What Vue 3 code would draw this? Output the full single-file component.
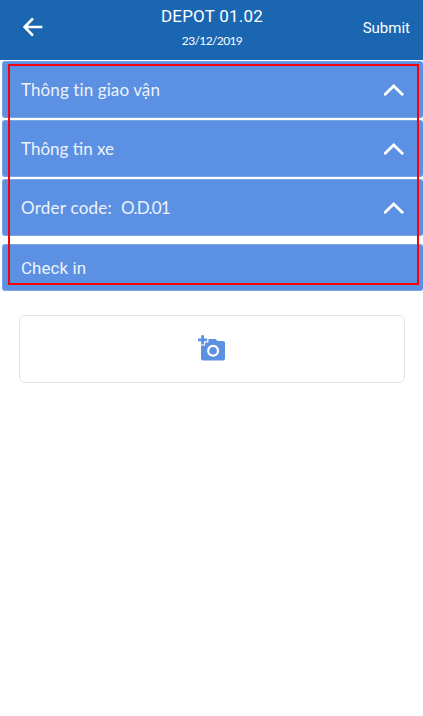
<script setup>
const sections = [
  { title: 'Thông tin giao vận' },
  { title: 'Thông tin xe' },
  { title: 'Order code:', value: 'O.D.01' }
]
</script>

<template>
  <div class="screen">
    <header class="bar">
      <button class="back" aria-label="Back">
        <svg width="20" height="20" viewBox="0 0 20 20"><path d="M19.3 10H2M10 1.4L1.6 10l8.4 8.6" /></svg>
      </button>
      <div class="heading">
        <h1>DEPOT 01.02</h1>
        <p>23/12/2019</p>
      </div>
      <button class="submit">Submit</button>
    </header>
    <main>
      <section v-for="(item, i) in sections" :key="item.title" class="panel" :class="'panel-' + i">
        <span>{{ item.title }}</span>
        <span v-if="item.value" class="value">{{ item.value }}</span>
        <svg width="20" height="12" viewBox="0 0 20 12"><path class="chevron" d="M1.2 10.3L9.7 2l8.5 8.3" /></svg>
      </section>
      <section class="panel check"><span>Check in</span></section>
      <button class="photo" aria-label="Add photo">
        <svg width="28" height="27" viewBox="0 0 28 27">
          <path class="fill" d="M3.2 .2h2.8v3.4H9.2v2.6H6v3.3H3.2V6.2H0V3.6h3.2z" />
          <path class="fill" fill-rule="evenodd" d="M10.4 4h7.1l2 2H25q2 0 2 2v15.4q0 2-2 2H5q-2 0-2-2V10.5h4V7.5h3.4zM15.1 9.7a6 6 0 1 0 .01 0z" />
          <circle class="fill" cx="15.1" cy="15.7" r="3.8" />
        </svg>
      </button>
    </main>
    <div class="outline"></div>
  </div>
</template>

<style>
body { margin: 0; background: #fff; }
</style>

<style scoped>
.screen { position: relative; width: 423px; height: 716px; overflow: hidden; background: #fff; color: #fff; font-family: Roboto, "Liberation Sans", sans-serif; }
button { border: 0; padding: 0; background: none; color: inherit; font: inherit; }
.bar { box-sizing: border-box; height: 60px; display: grid; grid-template-columns: 110px 1fr 110px; background: #1b66b1; }
.back { display: flex; align-items: flex-start; padding: 17px 0 0 23px; }
svg { display: block; flex: none; }
path { fill: none; stroke: #fff; stroke-width: 2.7; }
.chevron { stroke-width: 2.9; stroke-linecap: round; }
.heading { text-align: center; padding-left: 1px; }
h1 { margin: 6px 0 0; font-size: 17px; line-height: 21px; font-weight: 400; letter-spacing: .22px; }
p { margin: 6px 0 0; font: 12px/16px Lato, sans-serif; letter-spacing: -.62px; }
.submit { text-align: right; padding: 0 13px 4px 0; font-size: 15px; }
main { display: flex; flex-direction: column; padding: 1px 0 0 2px; }
.panel { box-sizing: border-box; height: 57px; margin-bottom: 2px; padding: 0 19px 0 18px; display: flex; align-items: center; border: 1px solid #77a4e7; border-width: 1px 0 1px 1px; border-radius: 3px; background: #5b90e2; color: #edf3fc; font-family: Lato, "Noto Sans", sans-serif; font-size: 17px; letter-spacing: .1px; }
.panel svg { margin-left: auto; }
.panel-1 { letter-spacing: 0; }
.panel-2 { margin-top: .4px; letter-spacing: .25px; }
.value { margin-left: 9px; letter-spacing: -.8px; }
.check { height: 47.4px; margin-top: 5.4px; margin-bottom: 23.8px; font-family: Roboto, sans-serif; letter-spacing: .05px; }
.check span { padding-top: 2px; }
.photo { box-sizing: border-box; width: 386px; height: 68px; margin-left: 17px; display: flex; align-items: center; justify-content: center; border: 1px solid #e4e4e4; border-radius: 6px; }
.fill { fill: #5b90e2; stroke: none; }
.outline { position: absolute; box-sizing: border-box; left: 8px; top: 64px; width: 411px; height: 221px; border: 2px solid #fb0007; }
</style>
